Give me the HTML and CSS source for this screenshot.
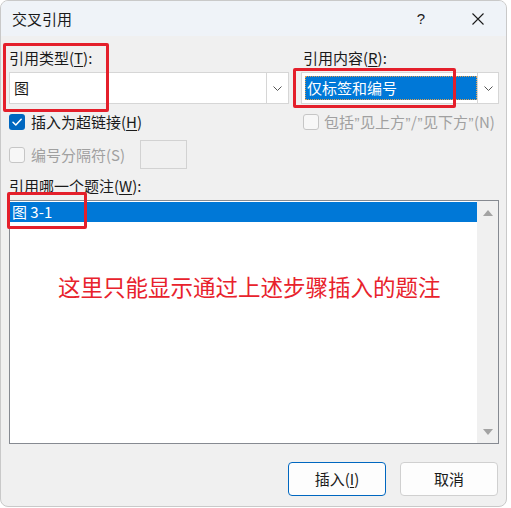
FILE: index.html
```html
<!DOCTYPE html>
<html lang="zh-CN">
<head>
<meta charset="utf-8">
<title>交叉引用</title>
<link rel="stylesheet" href="styles.css">
</head>
<body>
<div class="win">
  <div class="titlebar">
    <span class="title">交叉引用</span>
    <span class="spacer"></span>
    <span class="help">?</span>
    <span class="close">
      <svg width="12" height="12" viewBox="0 0 12 12"><path d="M0.5 0.5 L11.5 11.5 M11.5 0.5 L0.5 11.5" stroke="#1b1b1b" stroke-width="1.1" fill="none"/></svg>
    </span>
  </div>
  <div class="content">
    <div class="grid">
      <div class="label">引用类型(<u>T</u>):</div>
      <div class="label rlabel">引用内容(<u>R</u>):</div>
      <div class="combo">
        <span class="value">图</span>
        <span class="dropbtn"><svg width="9" height="5" viewBox="0 0 9 5"><path d="M0.5 0.5 L4.5 4.5 L8.5 0.5" stroke="#555" stroke-width="1" fill="none"/></svg></span>
      </div>
      <div class="combo">
        <span class="value"><span class="selval">仅标签和编号</span></span>
        <span class="dropbtn"><svg width="9" height="5" viewBox="0 0 9 5"><path d="M0.5 0.5 L4.5 4.5 L8.5 0.5" stroke="#555" stroke-width="1" fill="none"/></svg></span>
      </div>
      <div class="check-row">
        <span class="box checked"><svg width="16" height="16" viewBox="0 0 16 16"><path d="M4 8.2 L6.8 11 L12.2 5.2" stroke="#fff" stroke-width="1.5" fill="none" stroke-linecap="round" stroke-linejoin="round"/></svg></span>
        <span class="ctext">插入为超链接(<u>H</u>)</span>
      </div>
      <div class="check-row rcheck">
        <span class="box disabled"></span>
        <span class="ctext dim">包括<span class="q">”</span>见上方<span class="q">”</span>/<span class="q">”</span>见下方<span class="q">”</span>(N)</span>
      </div>
    </div>
    <div class="sep-row">
      <div class="sep-label">
        <span class="box disabled"></span>
        <span class="ctext dim">编号分隔符(S)</span>
      </div>
      <span class="sep-input"></span>
    </div>
    <div class="label list-label">引用哪一个题注(<u>W</u>):</div>
    <div class="listbox">
      <div class="items">
        <div class="item selected">图 3-1</div>
        <div class="note">这里只能显示通过上述步骤插入的题注</div>
      </div>
      <div class="scrollbar">
        <svg width="10" height="6" viewBox="0 0 10 6"><path d="M5 0 L10 6 L0 6 Z" fill="#a3a3a3"/></svg>
        <svg width="10" height="6" viewBox="0 0 10 6"><path d="M0 0 L10 0 L5 6 Z" fill="#a3a3a3"/></svg>
      </div>
    </div>
    <div class="buttons">
      <span class="btn default">插入(<u>I</u>)</span>
      <span class="btn">取消</span>
    </div>
  </div>
  <div class="mark mark1"></div>
  <div class="mark mark2"></div>
  <div class="mark mark3"></div>
</div>
</body>
</html>
```

FILE: styles.css
```css
* { box-sizing: border-box; }
html, body { margin: 0; padding: 0; background: #ffffff; }
body {
  font-family: "Noto Sans CJK SC", "Noto Sans", sans-serif;
  font-size: 15px;
  color: #1a1a1a;
}
u { text-decoration: underline; text-underline-offset: 2px; text-decoration-thickness: 1px; }

.win {
  position: relative;
  width: 507px;
  height: 507px;
  border: 1px solid #c9c9c9;
  border-radius: 8px;
  background: #f0f0f0;
  overflow: hidden;
}

.titlebar {
  display: flex;
  align-items: center;
  height: 35px;
  background: #eff3f8;
  padding: 0 22px 0 11px;
}
.title { font-size: 15px; line-height: 20px; }
.spacer { flex: 1; }
.help { width: 20px; text-align: center; font-size: 15px; line-height: 20px; font-family: "Liberation Sans", sans-serif; }
.close { display: flex; margin-left: 41px; }

.content { padding: 12px 0 0 8px; }

.grid {
  display: grid;
  grid-template-columns: 280px 198px;
  column-gap: 12px;
}
.label { line-height: 20px; height: 20px; }
.rlabel { padding-left: 2px; }
.grid .label { margin-bottom: 4px; }

.combo {
  display: flex;
  height: 32px;
  background: #ffffff;
  border: 1px solid #d6d6d6;
}
.combo .value {
  flex: 1;
  display: flex;
  align-items: center;
  padding-left: 4px;
  line-height: 20px;
}
.selval {
  display: block;
  width: 172px;
  height: 24px;
  margin-left: -1px;
  padding-left: 2px;
  line-height: 23px;
  color: #ffffff;
  background: #0078d7;
  outline: 1px dotted #e0a050;
  outline-offset: -1px;
}
.dropbtn {
  width: 22px;
  display: flex;
  align-items: center;
  justify-content: center;
  border-left: 1px solid #d6d6d6;
  background: #ffffff;
}

.check-row {
  display: flex;
  align-items: center;
  height: 20px;
  margin-top: 8px;
  white-space: nowrap;
}
.rcheck { padding-left: 2px; }
.rcheck .ctext { margin-left: 5px; }
.box {
  width: 16px;
  height: 16px;
  border-radius: 3px;
  flex: none;
  display: flex;
}
.box.checked { background: #0067c0; }
.box.disabled { border: 1px solid #c6c6c6; background: #f7f7f7; }
.ctext { margin-left: 6px; line-height: 20px; white-space: nowrap; }
.dim { color: #a0a0a0; }
.q {
  display: inline-block;
  width: 6px;
  text-align: center;
  font-family: "Liberation Sans", sans-serif;
}

.sep-row {
  display: flex;
  align-items: center;
  margin-top: 8px;
  height: 29px;
}
.sep-label { display: flex; align-items: center; width: 131px; }
.sep-input {
  width: 47px;
  height: 29px;
  border: 1px solid #d2d2d2;
  background: #f0f0f0;
}

.list-label { margin-top: 7px; }

.listbox {
  display: flex;
  width: 490px;
  height: 244px;
  margin-top: 4px;
  border: 1px solid #868a91;
  background: #ffffff;
}
.items {
  position: relative;
  flex: 1;
  padding: 1px 0 0 0;
}
.item {
  height: 20px;
  line-height: 20px;
  padding-left: 2px;
}
.item.selected { background: #0078d7; color: #ffffff; }
.note {
  position: absolute;
  left: 48px;
  top: 73px;
  font-size: 22.5px;
  line-height: 24px;
  color: #e8222c;
  white-space: nowrap;
}
.scrollbar {
  width: 21px;
  background: #f0f0f0;
  display: flex;
  flex-direction: column;
  justify-content: space-between;
  align-items: center;
  padding: 9px 0 8px 0;
}

.buttons {
  display: flex;
  justify-content: flex-end;
  gap: 14px;
  margin-top: 18px;
  padding-right: 8px;
}
.btn {
  width: 98px;
  height: 34px;
  display: flex;
  align-items: center;
  justify-content: center;
  background: #fdfdfd;
  border: 1px solid #d0d0d0;
  border-radius: 4px;
  line-height: 20px;
}
.btn.default { border-color: #0067c0; }

.mark {
  position: absolute;
  border: 3px solid #e41f2b;
  border-radius: 2px;
}
.mark1 { left: 2px; top: 42px; width: 106px; height: 69px; }
.mark2 { left: 292px; top: 67px; width: 163px; height: 40px; }
.mark3 { left: 6px; top: 191px; width: 80px; height: 37px; }
```
